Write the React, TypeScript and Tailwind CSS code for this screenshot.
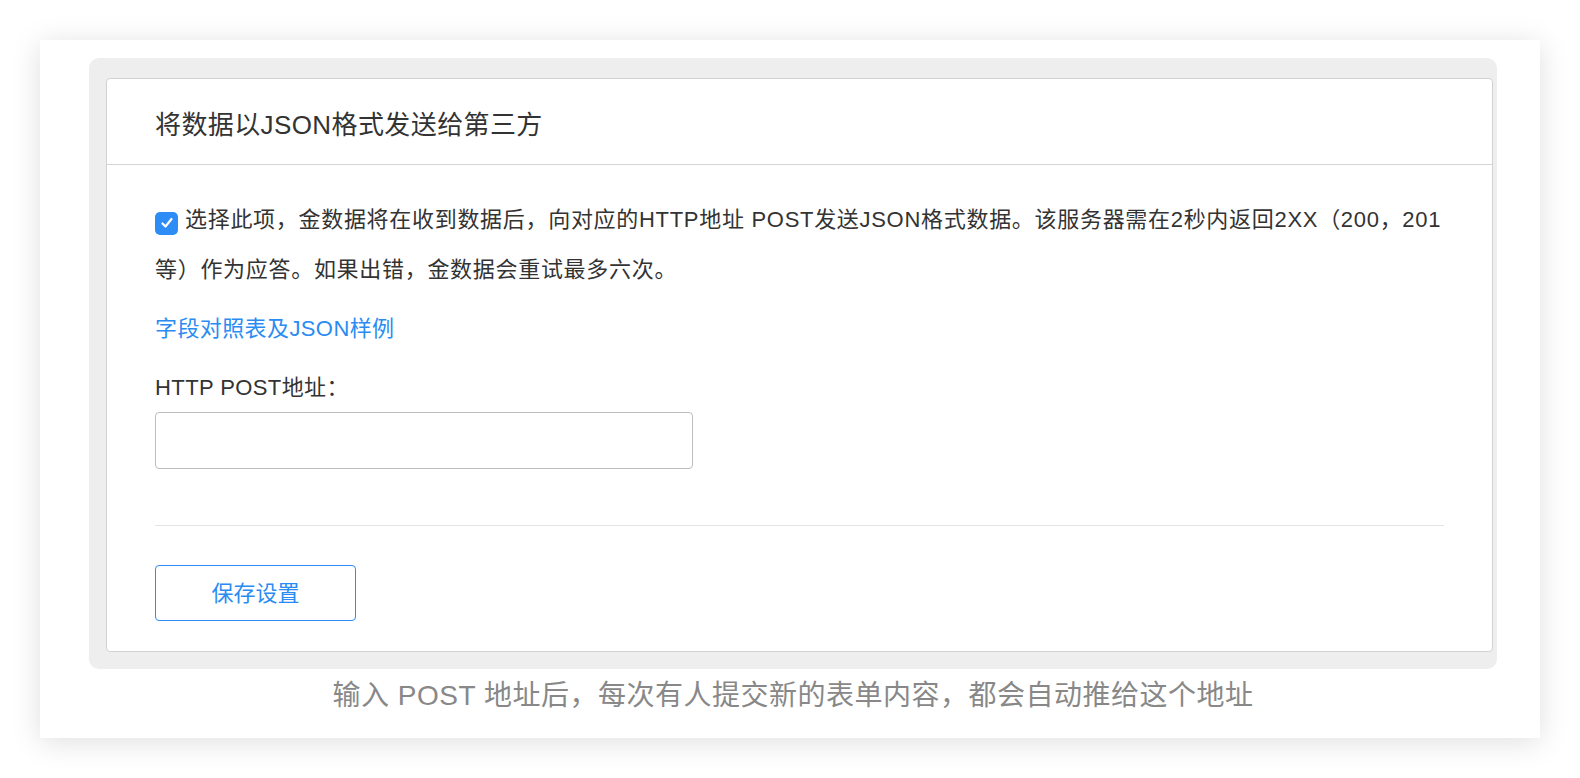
export default function App() {
  return (
    <div className="min-h-[778px] bg-white pt-10 px-10 font-['Liberation_Sans','Noto_Sans_CJK_SC',sans-serif]">
      <div className="w-[1500px] h-[698px] bg-white shadow-[0_4px_28px_rgba(0,0,0,0.13)] pt-[18px] pl-[49px] pr-[43px]">
        <div className="rounded-[10px] bg-[#eeeeee] pt-[20px] pl-[17px] pr-[4px] pb-[17px]">
          <div className="bg-white border border-[#d2d2d2] rounded-[4px]">
            <div className="h-[86px] border-b border-[#d4d4d4] px-12 pt-2 flex items-center">
              <h2 className="text-[26px] tracking-[0.4px] text-[#333333]">将数据以JSON格式发送给第三方</h2>
            </div>
            <div className="px-12 pt-[30px] pb-[30px]">
              <p className="text-[22px] leading-[50px] tracking-[0.7px] text-[#333333]">
                <span className="inline-flex align-[-4px] mr-[7px] w-[23px] h-[23px] rounded-[5px] bg-[#2e8cf6] items-center justify-center">
                  <svg viewBox="0 0 16 16" className="w-[16px] h-[16px]" fill="none" stroke="white" strokeWidth="2.2" strokeLinecap="round" strokeLinejoin="round">
                    <path d="M3.5 8.5 L6.5 11.5 L12.5 4" />
                  </svg>
                </span>
                选择此项，金数据将在收到数据后，向对应的HTTP地址 POST发送JSON格式数据。该服务器需在2秒内返回2XX（200，201
                <br />
                等）作为应答。如果出错，金数据会重试最多六次。
              </p>
              <a href="#" className="block mt-[18px] text-[22px] leading-[32px] tracking-[0.4px] text-[#2a8cf2]">
                字段对照表及JSON样例
              </a>
              <div className="mt-[27px] text-[22px] leading-[32px] tracking-[0.4px] text-[#333333]">HTTP POST地址：</div>
              <input type="text" className="mt-[8px] block w-[538px] h-[57px] border border-[#bdbdbd] rounded-[4px] px-3 text-[22px] outline-none" />
              <div className="mt-[56px] border-t border-[#e4e4e4]" />
              <button className="mt-[39px] w-[201px] h-[56px] border border-[#2e8cf6] rounded-[4px] text-[22px] text-[#2a8cf2] bg-white">
                保存设置
              </button>
            </div>
          </div>
        </div>
        <p className="text-center text-[28px] leading-[54px] tracking-[0.5px] text-[#888888]">
          输入 POST 地址后，每次有人提交新的表单内容，都会自动推给这个地址
        </p>
      </div>
    </div>
  )
}
